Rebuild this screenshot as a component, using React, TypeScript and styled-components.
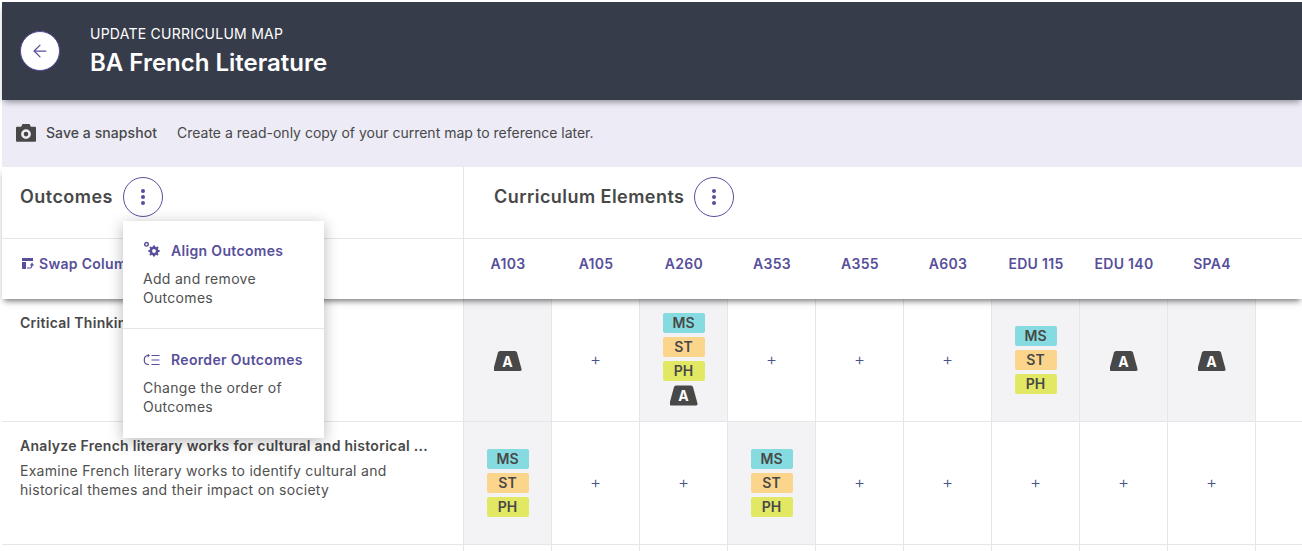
import React from "react";
import styled, { createGlobalStyle } from "styled-components";
import { ArrowLeft } from "lucide-react";

const purple = "#574f9a";
const ink = "#484848";
const line = "#e6e6e9";

const GlobalStyle = createGlobalStyle`
  html, body {
    margin: 0;
    height: 100%;
    overflow: hidden;
    background: #fff;
  }
  body {
    font-family: Inter, "Liberation Sans", sans-serif;
    color: ${ink};
  }
`;

const Page = styled.div`
  padding: 2px 0 0 2px;
  height: 551px;
  box-sizing: border-box;
  overflow: hidden;
`;

const Banner = styled.header`
  position: relative;
  z-index: 3;
  height: 98px;
  background: #373c4b;
  display: flex;
  align-items: center;
  padding-left: 18px;
  gap: 30px;
  box-shadow: 0 4px 6px -2px rgba(0, 0, 0, 0.4);
`;

const BackButton = styled.button`
  width: 40px;
  height: 40px;
  padding: 0;
  border-radius: 50%;
  background: #fff;
  border: 1px solid ${purple};
  color: ${purple};
  display: flex;
  align-items: center;
  justify-content: center;
`;

const BannerText = styled.div`
  display: flex;
  flex-direction: column;
  gap: 4px;
`;

const Eyebrow = styled.div`
  font-size: 14px;
  line-height: 19px;
  letter-spacing: 0.24px;
  color: #fff;
`;

const Title = styled.h1`
  margin: 0;
  font-size: 24px;
  line-height: 32px;
  font-weight: 600;
  color: #fff;
`;

const SnapshotBar = styled.div`
  height: 67px;
  padding: 0 0 2px 14px;
  box-sizing: border-box;
  background: #ecebf6;
  display: flex;
  align-items: center;
  font-size: 14px;
`;

const SnapshotLabel = styled.span`
  font-weight: 500;
  letter-spacing: 0.07px;
  margin-left: 10px;
  margin-right: 20px;
`;

const MapArea = styled.div`
  position: relative;
`;

const HeadBlock = styled.div`
  position: relative;
  z-index: 2;
  background: #fff;
  box-shadow: 0 4px 6px -2px rgba(0, 0, 0, 0.55);
`;

const TitleRow = styled.div`
  display: grid;
  grid-template-columns: 462px 1fr;
  height: 71px;
  border-bottom: 1px solid ${line};
`;

const TitleCell = styled.div<{ $first?: boolean }>`
  display: flex;
  align-items: center;
  gap: 10px;
  padding: 0 0 12px ${(props) => (props.$first ? "18px" : "30px")};
  border-right: ${(props) => (props.$first ? `1px solid ${line}` : "none")};
`;

const SectionName = styled.h2`
  margin: 0;
  font-size: 18px;
  font-weight: 600;
  letter-spacing: 0.45px;
  color: ${ink};
`;

const KebabButton = styled.button`
  width: 40px;
  height: 40px;
  padding: 0;
  border-radius: 50%;
  background: #fff;
  border: 1px solid ${purple};
  display: flex;
  flex-direction: column;
  align-items: center;
  justify-content: center;
  gap: 2px;
`;

const Dot = styled.i`
  width: 4px;
  height: 4px;
  border-radius: 50%;
  background: ${purple};
`;

const ColumnRow = styled.div`
  display: grid;
  grid-template-columns: 462px repeat(9, 88px);
  height: 60px;
`;

const SwapCell = styled.div`
  display: flex;
  align-items: center;
  gap: 5px;
  padding: 0 0 12px 19px;
  border-right: 1px solid ${line};
  font-size: 14px;
  font-weight: 600;
  letter-spacing: 0.3px;
  color: ${purple};
`;

const ColumnName = styled.div`
  display: flex;
  align-items: center;
  justify-content: center;
  padding-bottom: 12px;
  font-size: 14px;
  font-weight: 600;
  letter-spacing: 0.3px;
  color: ${purple};
`;

const BodyRow = styled.div<{ $height: number }>`
  display: grid;
  grid-template-columns: 462px repeat(9, 88px);
  height: ${(props) => props.$height}px;
  border-bottom: 1px solid ${line};
`;

const OutcomeCell = styled.div`
  padding: 14px 18px;
  border-right: 1px solid ${line};
`;

const OutcomeName = styled.div`
  font-size: 14px;
  line-height: 19px;
  font-weight: 600;
  letter-spacing: 0.28px;
  color: ${ink};
`;

const OutcomeText = styled.div`
  margin-top: 6px;
  font-size: 14px;
  line-height: 19px;
  letter-spacing: 0.28px;
  color: #505050;
`;

const MapCell = styled.div<{ $filled?: boolean }>`
  display: flex;
  flex-direction: column;
  align-items: center;
  justify-content: center;
  gap: 4px;
  border-right: 1px solid ${line};
  background: ${(props) => (props.$filled ? "#f3f3f6" : "#fff")};
`;

const AddMark = styled.span`
  margin-bottom: 3px;
  font-size: 17px;
  line-height: 20px;
  font-weight: 300;
  color: #4a5288;
`;

const Tag = styled.span<{ $color: string }>`
  width: 42px;
  height: 20px;
  border-radius: 2px;
  background: ${(props) => props.$color};
  font-size: 14px;
  line-height: 20px;
  font-weight: 600;
  text-align: center;
  color: ${ink};
`;

const ABadge = styled.span`
  width: 28px;
  height: 21px;
  margin-bottom: 1px;
  background: ${ink};
  clip-path: path("M6.5 0.5 H21.5 Q23 0.5 23.5 2 L28 18.5 Q28.4 20.5 26.5 20.5 H1.5 Q-0.4 20.5 0 18.5 L4.5 2 Q5 0.5 6.5 0.5 Z");
  font-size: 14px;
  line-height: 21px;
  font-weight: 700;
  text-align: center;
  color: #fff;

  &:only-child {
    margin: 2px 0 0;
  }
`;

const Menu = styled.div`
  position: absolute;
  z-index: 5;
  left: 121px;
  top: 54px;
  width: 201px;
  background: #fff;
  box-shadow: 0 3px 14px rgba(0, 0, 0, 0.28);
`;

const MenuItem = styled.div<{ $last?: boolean }>`
  padding: ${(props) => (props.$last ? "21.3px 20px 21px" : "20px")};
  border-top: ${(props) => (props.$last ? `1px solid ${line}` : "none")};
`;

const MenuTitle = styled.div`
  display: flex;
  align-items: center;
  gap: 11px;
  font-size: 14px;
  line-height: 19.6px;
  font-weight: 600;
  letter-spacing: 0.33px;
  color: ${purple};
`;

const MenuText = styled.div`
  margin-top: 8px;
  font-size: 14px;
  line-height: 19.6px;
  letter-spacing: 0.3px;
  color: #505050;
`;

const CameraIcon = () => (
  <svg width="20" height="20" viewBox="0 0 20 20">
    <path
      fill="#484848"
      fillRule="evenodd"
      d="M6.5 1 H13.5 L14.8 3.8 H19 Q20 3.8 20 4.8 V17.8 Q20 18.8 19 18.8 H1 Q0 18.8 0 17.8 V4.8 Q0 3.8 1 3.8 H5.2 Z M10 6.2 A4.9 4.9 0 1 0 10 16 A4.9 4.9 0 1 0 10 6.2 Z M10 8.8 A2.3 2.3 0 1 1 10 13.4 A2.3 2.3 0 1 1 10 8.8 Z"
    />
  </svg>
);

const SwapIcon = () => (
  <svg width="13" height="13" viewBox="0 0 13 13" fill={purple}>
    <path d="M1 1 H12 V4 H1 Z" />
    <path d="M1 5 H5 V12 H2 Q1 12 1 11 Z" />
    <path d="M6 11 H9 Q11 11 11 7.5 M9.5 8.5 L11 6.5 L12.5 8.5" fill="none" stroke={purple} strokeWidth="1.2" />
  </svg>
);

const GearsIcon = () => (
  <svg width="17" height="17" viewBox="0 0 17 17" overflow="visible" fill="none" stroke={purple}>
    <circle cx="3.5" cy="2.3" r="1.8" strokeWidth="1.4" />
    <circle cx="11" cy="9" r="3.2" strokeWidth="2.6" />
    <path strokeWidth="2" d="M11 3.4 V5 M11 13 V14.6 M5.4 9 H7 M15 9 H16.6 M7 5 L8.2 6.2 M13.8 11.8 L15 13 M7 13 L8.2 11.8 M13.8 6.2 L15 5" />
  </svg>
);

const ReorderIcon = () => (
  <svg width="17" height="12" viewBox="0 0 17 12" fill="none" stroke={purple} strokeWidth="1.2">
    <path d="M6 1.5 H5.3 Q1.3 1.5 1.3 6 Q1.3 10.5 5.3 10.5 H6" />
    <path d="M4.5 0 L6.5 1.5 L4.5 3" strokeWidth="1" />
    <path d="M8.5 1.5 H16.5 M8.5 6 H16.5 M8.5 10.5 H16.5" />
  </svg>
);

const tagSet = [
  { label: "MS", color: "#86dbe0" },
  { label: "ST", color: "#fbd58b" },
  { label: "PH", color: "#e2e864" },
];

const columns = ["A103", "A105", "A260", "A353", "A355", "A603", "EDU 115", "EDU 140", "SPA4"];

// t = tags, a = the A badge, ta = both, "" = empty cell with the add mark
const rows = [
  {
    name: "Critical Thinking",
    text: "",
    height: 122,
    cells: ["a", "", "ta", "", "", "", "t", "a", "a"],
  },
  {
    name: "Analyze French literary works for cultural and historical ...",
    text: "Examine French literary works to identify cultural and historical themes and their impact on society",
    height: 122,
    cells: ["t", "", "", "t", "", "", "", "", ""],
  },
];

const CellContent = ({ kind }: { kind: string }) => {
  if (!kind) return <AddMark>+</AddMark>;
  return (
    <>
      {kind.includes("t") &&
        tagSet.map((tag) => (
          <Tag key={tag.label} $color={tag.color}>
            {tag.label}
          </Tag>
        ))}
      {kind.includes("a") && <ABadge>A</ABadge>}
    </>
  );
};

const App = () => {
  return (
    <Page>
      <GlobalStyle />
      <Banner>
        <BackButton>
          <ArrowLeft size={20} strokeWidth={1.5} />
        </BackButton>
        <BannerText>
          <Eyebrow>UPDATE CURRICULUM MAP</Eyebrow>
          <Title>BA French Literature</Title>
        </BannerText>
      </Banner>
      <SnapshotBar>
        <CameraIcon />
        <SnapshotLabel>Save a snapshot</SnapshotLabel>
        Create a read-only copy of your current map to reference later.
      </SnapshotBar>
      <MapArea>
        <HeadBlock>
          <TitleRow>
            <TitleCell $first>
              <SectionName>Outcomes</SectionName>
              <KebabButton>
                <Dot />
                <Dot />
                <Dot />
              </KebabButton>
            </TitleCell>
            <TitleCell>
              <SectionName>Curriculum Elements</SectionName>
              <KebabButton>
                <Dot />
                <Dot />
                <Dot />
              </KebabButton>
            </TitleCell>
          </TitleRow>
          <ColumnRow>
            <SwapCell>
              <SwapIcon />
              Swap Columns
            </SwapCell>
            {columns.map((column) => (
              <ColumnName key={column}>{column}</ColumnName>
            ))}
          </ColumnRow>
        </HeadBlock>
        {rows.map((row) => (
          <BodyRow key={row.name} $height={row.height}>
            <OutcomeCell>
              <OutcomeName>{row.name}</OutcomeName>
              {row.text && <OutcomeText>{row.text}</OutcomeText>}
            </OutcomeCell>
            {row.cells.map((kind, i) => (
              <MapCell key={i} $filled={!!kind}>
                <CellContent kind={kind} />
              </MapCell>
            ))}
          </BodyRow>
        ))}
        <BodyRow $height={40}>
          <OutcomeCell />
          {columns.map((column) => (
            <MapCell key={column} />
          ))}
        </BodyRow>
        <Menu>
          <MenuItem>
            <MenuTitle>
              <GearsIcon />
              Align Outcomes
            </MenuTitle>
            <MenuText>Add and remove Outcomes</MenuText>
          </MenuItem>
          <MenuItem $last>
            <MenuTitle>
              <ReorderIcon />
              Reorder Outcomes
            </MenuTitle>
            <MenuText>Change the order of Outcomes</MenuText>
          </MenuItem>
        </Menu>
      </MapArea>
    </Page>
  );
};

export default App;
